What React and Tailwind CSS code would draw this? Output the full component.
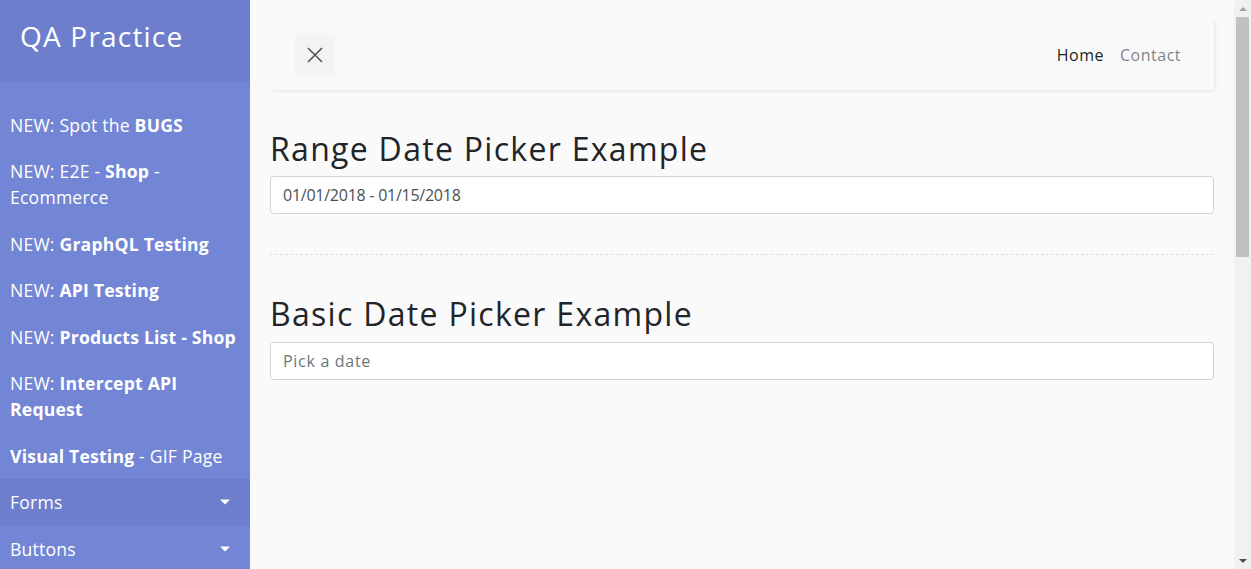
import React from "react";

const font = "font-['Open_Sans',sans-serif]";

function SideLink({ children, dark }) {
  return (
    <li>
      <a className={`block px-[10px] py-[10px] text-[17.6px] leading-[26.4px] tracking-[0.2px] text-white whitespace-nowrap ${dark ? "bg-[#6d7fcc]" : ""}`}>
        {children}
      </a>
    </li>
  );
}

function DropLink({ children, dark }) {
  return (
    <li>
      <a className={`relative block px-[10px] py-[10px] text-[17.6px] leading-[26.4px] tracking-[0.2px] text-white ${dark ? "bg-[#6d7fcc]" : ""}`}>
        {children}
        <span className="absolute right-[20px] top-1/2 -translate-y-1/2 w-0 h-0 border-l-[5px] border-r-[5px] border-t-[5px] border-l-transparent border-r-transparent border-t-white" />
      </a>
    </li>
  );
}

function Scrollbar() {
  return (
    <div className="w-[17px] shrink-0 h-screen bg-[#f1f1f1] flex flex-col items-center">
      <div className="h-[17px] w-full flex items-center justify-center">
        <span className="w-0 h-0 border-l-[4px] border-r-[4px] border-b-[4px] border-l-transparent border-r-transparent border-b-[#a3a3a3]" />
      </div>
      <div className="w-[13px] h-[240px] bg-[#c1c1c1]" />
      <div className="flex-1" />
      <div className="h-[17px] w-full flex items-center justify-center">
        <span className="w-0 h-0 border-l-[4px] border-r-[4px] border-t-[4px] border-l-transparent border-r-transparent border-t-[#505050]" />
      </div>
    </div>
  );
}

export default function App() {
  return (
    <div className={`h-screen overflow-hidden bg-[#fafafa] flex ${font}`}>
      <nav className="w-[250px] shrink-0 bg-[#7386d5] text-white h-screen overflow-hidden">
        <div className="bg-[#6d7fcc] p-[20px]">
          <h3 className="text-[28px] leading-[33.6px] mb-[8px] font-medium tracking-[1.2px]">QA Practice</h3>
        </div>
        <ul className="py-[20px]">
          <SideLink>NEW: Spot the <b>BUGS</b></SideLink>
          <SideLink>NEW: E2E - <b>Shop</b> -<br />Ecommerce</SideLink>
          <SideLink>NEW: <b>GraphQL Testing</b></SideLink>
          <SideLink>NEW: <b>API Testing</b></SideLink>
          <SideLink>NEW: <b>Products List - Shop</b></SideLink>
          <SideLink>NEW: <b>Intercept API</b><br /><b>Request</b></SideLink>
          <SideLink><b>Visual Testing</b> - GIF Page</SideLink>
          <DropLink dark>Forms</DropLink>
          <DropLink>Buttons</DropLink>
          <DropLink>Iframes</DropLink>
          <DropLink>Alerts</DropLink>
        </ul>
      </nav>
      <main className="flex-1 min-w-0 p-[20px] h-screen overflow-hidden">
        <div className="bg-[#f8f9fa] shadow-[1px_1px_3px_rgba(0,0,0,0.1)] px-[25px] py-[15px] mb-[40px] flex items-center justify-between">
          <button className="w-[40px] h-[40px] bg-[#f3f3f3] flex items-center justify-center">
            <svg width="20" height="20" viewBox="0 0 20 20" fill="none" stroke="#555" strokeWidth="1.6">
              <path d="M3 3L17 17M17 3L3 17" />
            </svg>
          </button>
          <div className="flex text-[16px] leading-[24px] tracking-[0.5px]">
            <a className="px-[8px] text-[rgba(0,0,0,0.9)]">Home</a>
            <a className="px-[8px] text-[rgba(0,0,0,0.5)]">Contact</a>
          </div>
        </div>
        <h2 className="text-[32px] leading-[38.4px] font-medium tracking-[1.3px] text-[#212529] mb-[8px]">Range Date Picker Example</h2>
        <input
          readOnly
          value="01/01/2018 - 01/15/2018"
          className="block w-full h-[38px] px-[12px] py-[6px] text-[16px] tracking-[-0.25px] text-[#495057] bg-white border border-[#ced4da] rounded-[4px] outline-none"
        />
        <div className="h-px border-b border-dashed border-[#ddd] my-[40px]" />
        <h2 className="text-[32px] leading-[38.4px] font-medium tracking-[1.3px] text-[#212529] mb-[8px]">Basic Date Picker Example</h2>
        <input
          placeholder="Pick a date"
          className="block w-full h-[38px] px-[12px] py-[6px] text-[16px] tracking-[0.7px] text-[#495057] placeholder:text-[#6c757d] bg-white border border-[#ced4da] rounded-[4px] outline-none"
        />
      </main>
      <Scrollbar />
    </div>
  );
}
